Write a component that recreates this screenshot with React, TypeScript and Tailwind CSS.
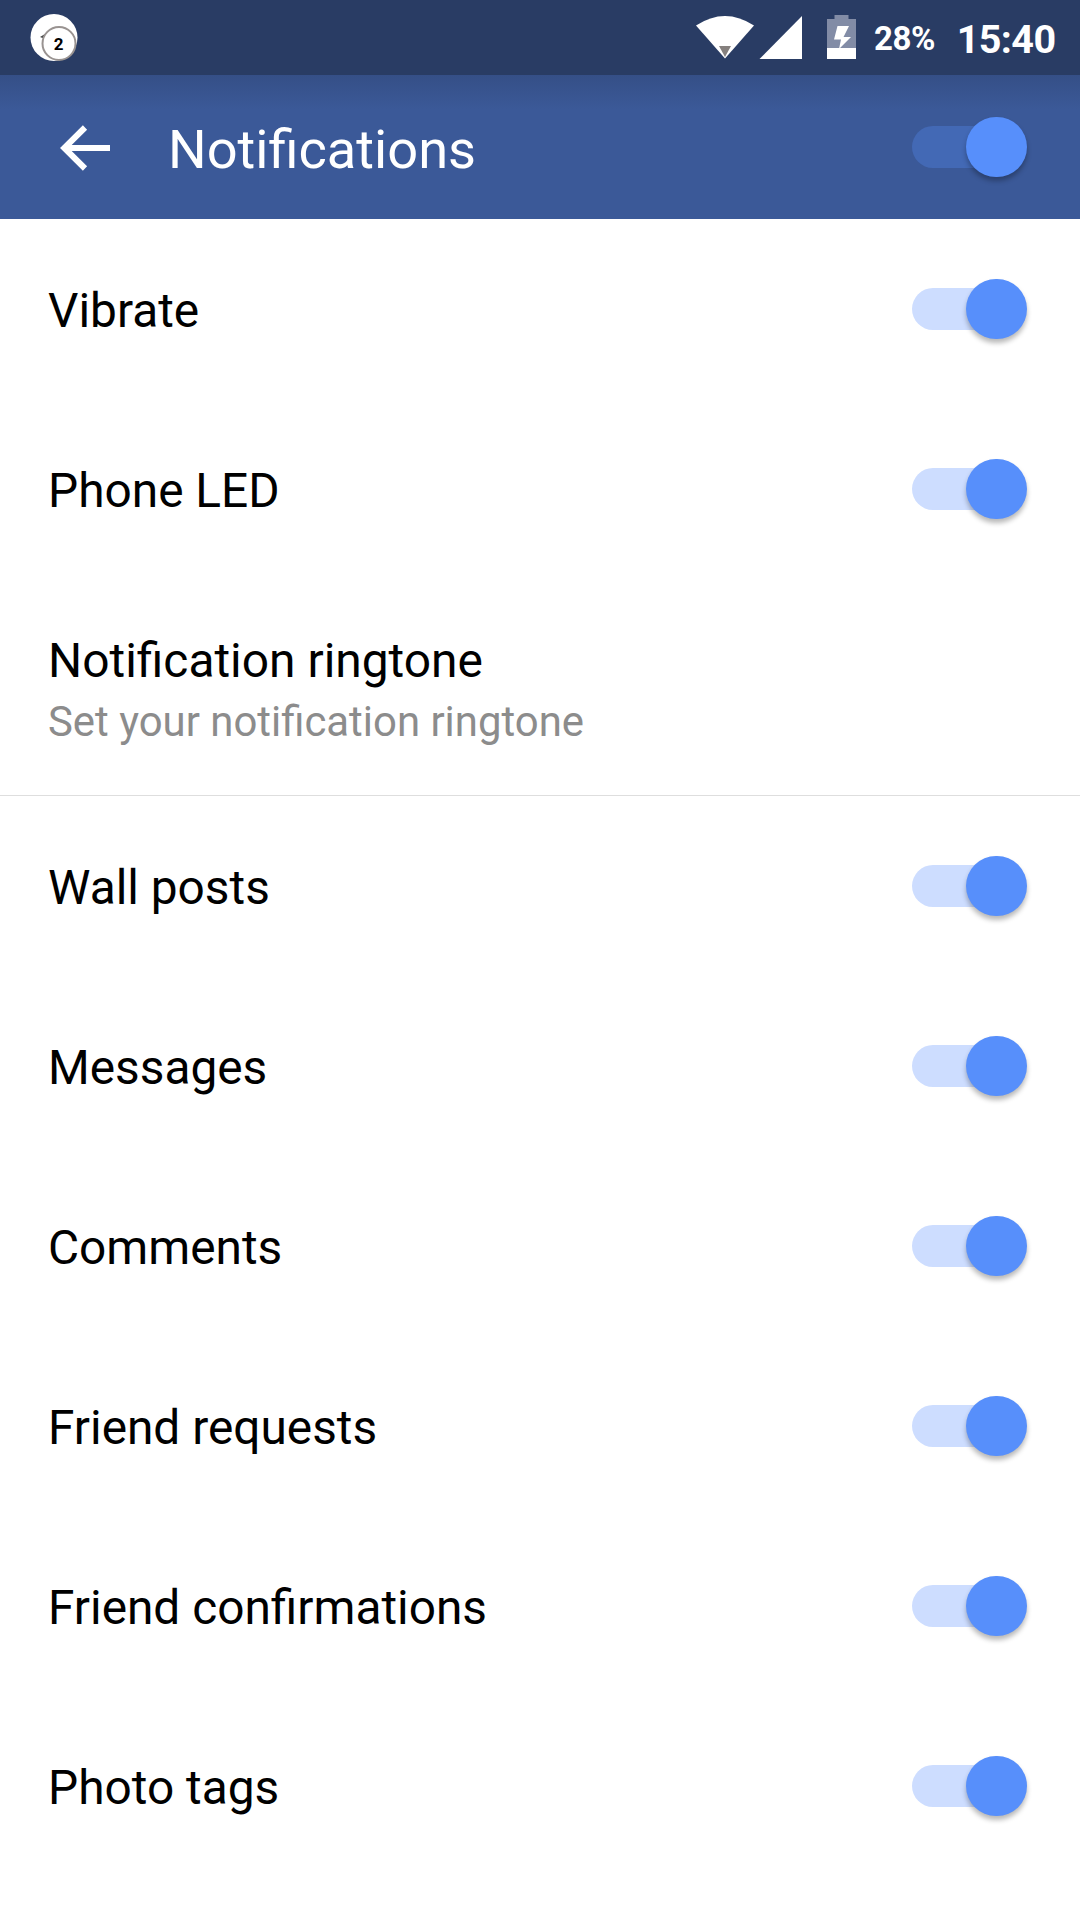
import React from 'react';

const settings = {
  alerts: ['Vibrate', 'Phone LED'],
  events: ['Wall posts', 'Messages', 'Comments', 'Friend requests', 'Friend confirmations', 'Photo tags'],
};

function Toggle({ dark = false }: { dark?: boolean }) {
  return (
    <div className="flex h-[60px] w-[114px] items-center">
      <div className={`flex h-[42px] w-full items-center justify-end rounded-full ${dark ? 'bg-[#4369b5]' : 'bg-[#cdddff]'}`}>
        <div className="-mr-[0.5px] h-[60.5px] w-[60.5px] shrink-0 rounded-full bg-[#578ffb] shadow-[0_4px_5px_rgba(0,0,0,0.28)]" />
      </div>
    </div>
  );
}

function SettingRow({ label }: { label: string }) {
  return (
    <div className="flex h-[180px] items-center justify-between pl-12 pr-[54px]">
      <span className="pt-[3px] text-[47.8px] leading-[56px]">{label}</span>
      <Toggle />
    </div>
  );
}

export default function App() {
  return (
    <div className="h-[1920px] w-[1080px] overflow-hidden bg-white font-[Roboto,sans-serif] text-black">
      {/* Status bar */}
      <div className="flex h-[75px] items-center bg-[#293c64] text-white">
        <svg className="ml-[30px]" width="50" height="75" viewBox="30 0 50 75">
          <circle cx="54" cy="37.5" r="23.5" fill="#fff" />
          <path d="M40 37L45 34V39Z" fill="#444" />
          <circle cx="59" cy="43.5" r="16.5" fill="#fff" stroke="#999391" strokeWidth="2" />
          <text x="58.7" y="50" textAnchor="middle" fontSize="17" fontWeight="700" fill="#000">2</text>
        </svg>
        <svg className="ml-[616px] shrink-0" width="160" height="75" viewBox="696 0 160 75">
          {/* Wifi */}
          <path d="M696 25.5Q725 6.500 754 25.5L725 58.500Z" fill="#fff" />
          <path d="M719 46H731L725 57Z" fill="#85807e" />
          {/* Signal */}
          <path d="M759.500 59L802 16V59Z" fill="#fff" />
          {/* Battery */}
          <path d="M827 19H834.500V15H848.500V19H856V48H827Z" fill="#828ca6" />
          <path d="M827 48H856V59H827Z" fill="#fff" />
          <path d="M837.500 26H849L843.500 37H851L839 49L841 39.500H834Z" fill="#fff" />
        </svg>
        <span className="ml-[18px] w-[62px] pt-[3px] text-[33px] font-bold tracking-[-0.4px]">28%</span>
        <span className="ml-auto mr-[24.5px] pt-1 text-[39.5px] font-bold tracking-[-0.6px]">15:40</span>
      </div>

      {/* Title bar */}
      <header className="flex h-36 items-center bg-[#3b5998] bg-[linear-gradient(#354f87,#3b5998_34px)] pl-[60px] pr-[54px] text-white">
        <svg className="mt-0.5" width="50" height="48" viewBox="0 0 50 48" fill="none" stroke="#fff" strokeWidth="6">
          <path d="M50 24H5M25 3.500L4.300 24L25 44.500" />
        </svg>
        <h1 className="ml-[58px] flex-1 pt-[5px] text-[54.2px]">Notifications</h1>
        <Toggle dark />
      </header>

      {settings.alerts.map((label) => <SettingRow key={label} label={label} />)}
      <div className="h-[216px] pl-12 pt-[54px]">
        <div className="text-[47.9px] leading-[56px]">Notification ringtone</div>
        <div className="mt-[5px] text-[41.9px] leading-[56px] text-[#8c8c8c]">Set your notification ringtone</div>
      </div>
      <div className="border-t border-[#dedede]">
        {settings.events.map((label) => <SettingRow key={label} label={label} />)}
      </div>
    </div>
  );
}
